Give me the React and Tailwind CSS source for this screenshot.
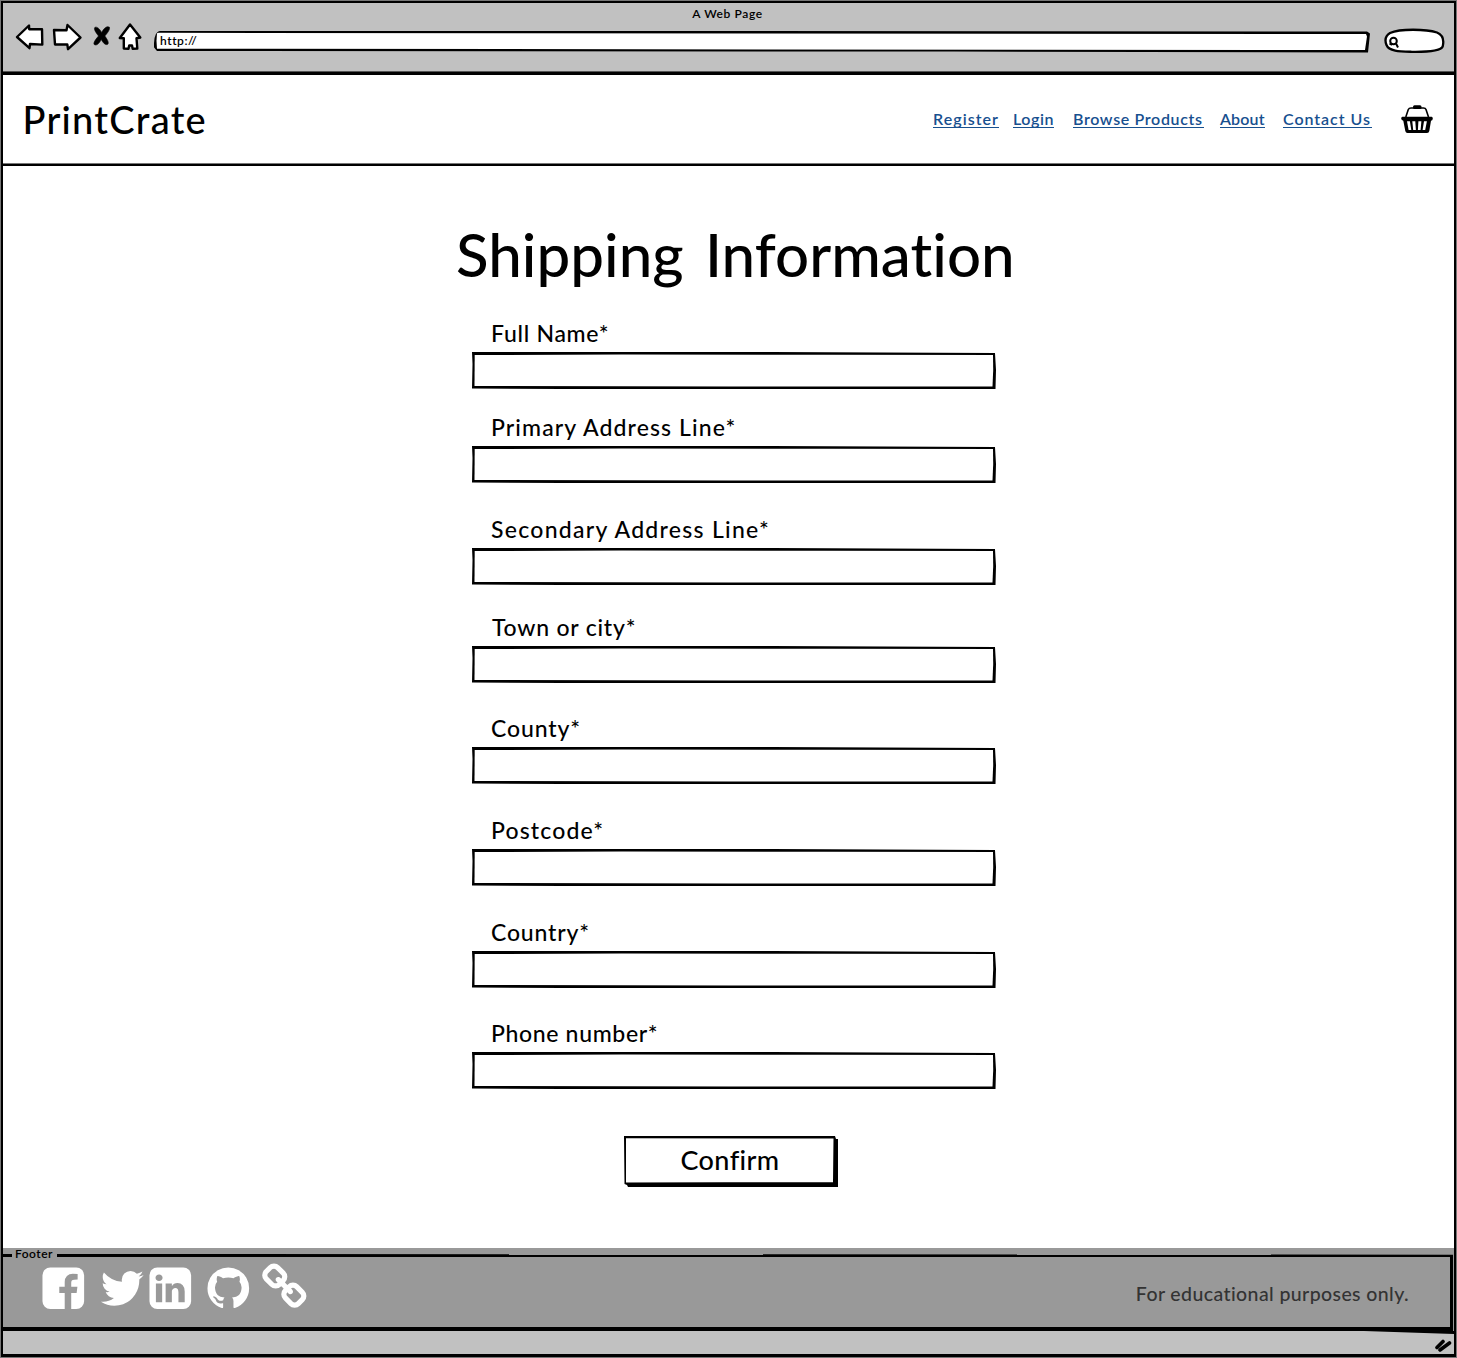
import React from 'react';

const FIELDS = [
  { label: 'Full Name*', cls: 'tracking-[0.72px]', gap: '' },
  { label: 'Primary Address Line*', cls: 'tracking-[1.11px]', gap: 'mt-6' },
  { label: 'Secondary Address Line*', cls: 'tracking-[1.28px]', gap: 'mt-8' },
  { label: 'Town or city*', cls: 'pl-[20px] tracking-[0.78px]', gap: 'mt-7' },
  { label: 'County*', cls: 'tracking-[0.87px]', gap: 'mt-[31px]' },
  { label: 'Postcode*', cls: 'tracking-[1.14px]', gap: 'mt-8' },
  { label: 'Country*', cls: 'tracking-[0.83px]', gap: 'mt-8' },
  { label: 'Phone number*', cls: 'tracking-[0.66px]', gap: 'mt-[31px]' },
];

const LINKS = [
  { label: 'Register', cls: 'w-[66px] tracking-[1.05px]' },
  { label: 'Login', cls: 'ml-[14px] w-[41px] tracking-[0.55px]' },
  { label: 'Browse Products', cls: 'ml-[19px] w-[131px] tracking-[0.65px]' },
  { label: 'About', cls: 'ml-4 w-[45px] tracking-[0.15px]' },
  { label: 'Contact Us', cls: 'ml-[18px] w-[89px] tracking-[0.95px]' },
];

function Fa({ d, className }) {
  return (
    <svg viewBox="0 0 1792 1792" className={'block size-[48.6px] shrink-0 fill-white ' + className}>
      <path d={d} />
    </svg>
  );
}

const FACEBOOK = 'M1376 128q119 0 203.5 84.5t84.5 203.5v960q0 119-84.5 203.5t-203.5 84.5h-188v-595h199l30-232h-229v-148q0-56 23.5-84t91.5-28l122-1v-207q-63-9-178-9-136 0-217.5 80t-81.5 226v171h-200v232h200v595h-532q-119 0-203.5-84.5t-84.5-203.5v-960q0-119 84.5-203.5t203.5-84.5h960z';
const TWITTER = 'M1684 408q-67 98-162 167 1 14 1 42 0 130-38 259.5t-115.5 248.5-184.5 210.5-258 146-323 54.5q-271 0-496-145 35 4 78 4 225 0 401-138-105-2-188-64.5t-114-159.5q33 5 61 5 43 0 85-11-112-23-185.5-111.5t-73.5-205.5v-4q68 38 146 41-66-44-105-115t-39-154q0-88 44-163 121 149 294.5 238.5t371.5 99.5q-8-38-8-74 0-134 94.5-228.5t228.5-94.5q140 0 236 102 109-21 205-78-37 115-142 178 93-10 186-50z';
const LINKEDIN = 'M365 1414h231v-694h-231v694zm246-908q-1-52-36-86t-93-34-94.5 34-36.5 86q0 51 35.5 85.5t92.5 34.5h1q59 0 95-34.5t36-85.5zm585 908h231v-398q0-154-73-233t-193-79q-136 0-209 117h2v-101h-231q3 66 0 694h231v-388q0-38 7-56 15-35 45-59.5t74-24.5q116 0 116 157v371zm468-998v960q0 119-84.5 203.5t-203.5 84.5h-960q-119 0-203.5-84.5t-84.5-203.5v-960q0-119 84.5-203.5t203.5-84.5h960q119 0 203.5 84.5t84.5 203.5z';
const GITHUB = 'M896 128q209 0 385.5 103t279.5 279.5 103 385.5q0 251-146.5 451.5t-378.5 277.5q-27 5-40-7t-13-30q0-3 .5-76.5t.5-134.5q0-97-52-142 57-6 102.5-18t94-39 81-66.5 53-105 20.5-150.5q0-119-79-206 37-91-8-204-28-9-81 11t-92 44l-38 24q-93-26-192-26t-192 26q-16-11-42.5-27t-83.5-38.5-85-13.5q-45 113-8 204-79 87-79 206 0 85 20.5 150t52.5 105 80.5 67 94 39 102.5 18q-39 36-49 103-21 10-45 15t-57 5-65.5-21.5-55.5-62.5q-19-32-48.5-52t-49.5-24l-20-3q-21 0-29 4.5t-5 11.5 9 14 13 12l7 5q22 10 43.5 38t31.5 51l10 23q13 38 44 61.5t67 30 69.5 7 55.5-3.5l23-4q0 38 .5 88.5t.5 54.5q0 18-13 30t-40 7q-232-77-378.5-277.5t-146.5-451.5q0-209 103-385.5t279.5-279.5 385.5-103z';
const CHAIN = 'M1520 1216q0-40-28-68l-208-208q-28-28-68-28-42 0-72 32 3 3 19 18.5t21.5 21.5 15 19 13 25.5 3.5 27.5q0 40-28 68t-68 28q-15 0-27.5-3.5t-25.5-13-19-15-21.5-21.5-18.5-19q-33 31-33 73 0 40 28 68l206 207q27 27 68 27 40 0 68-26l147-146q28-28 28-67zm-703-705q0-40-28-68l-206-207q-28-28-68-28-39 0-68 27l-147 146q-28 28-28 67 0 40 28 68l208 208q27 27 68 27 42 0 72-31-3-3-19-18.5t-21.5-21.5-15-19-13-25.5-3.5-27.5q0-40 28-68t68-28q15 0 27.5 3.5t25.5 13 19 15 21.5 21.5 18.5 19q33-31 33-73zm895 705q0 120-85 203l-147 146q-83 83-203 83-121 0-204-85l-206-207q-83-83-83-203 0-123 88-209l-88-88q-86 88-208 88-120 0-204-84l-208-208q-84-84-84-204t85-203l147-146q83-83 203-83 121 0 204 85l206 207q83 83 83 203 0 123-88 209l88 88q86-88 208-88 120 0 204 84l208 208q84 84 84 204z';

function BrowserBar() {
  return (
    <div className="relative h-[72px] shrink-0 border-b-[3px] border-black bg-[#c1c1c1] shadow-[inset_0_-1px_0_#555]">
      <div className="pr-0.5 pt-0.5 text-center text-xs font-semibold leading-[17px] tracking-[0.6px]">A Web Page</div>
      <div className="flex items-start pl-[11px]">
        <svg viewBox="14 22 130 30" className="h-[30px] w-[130px] fill-white stroke-black stroke-[2.4] [stroke-linejoin:round]">
          <path d="M17 37 29 25.5 29.2 29.2 42 29.3 42.3 44.6 30 44 29.5 48.2Z" />
          <path d="M54 30 66.5 30.2 67.5 25 80.5 37.5 68 49.2 67.3 44.4 55 44.5Z" />
          <path className="fill-black stroke-[0.6]" d="M94.800 27.500C97 26 100 29.500 101.800 32.500C103.500 28.500 107 25.500 109.500 27.300C110 30 107 33.500 104.800 36C107 39 109 42 108 44C105.500 46 103 42.500 101.200 39.500C99.500 43 96.500 46.500 94 44.300C93.300 42 96.500 38.500 98.500 36C96.300 33 93.500 29.500 94.800 27.500Z" />
          <path d="M130 24.500 140.300 37.500 136.500 38.200 137.300 48.500 132.700 48.700 132 45.500 129.200 45.500 128.500 48.800 123.800 48.500 123.800 38.200 119.800 38Z" />
        </svg>
        <div className="relative ml-[10px] mt-[8.500px] h-[22px] w-[1216px]">
          <div className="absolute inset-0 rounded-[6px_2px_2px_6px/12px_3px_8px_6px] bg-black [clip-path:polygon(0_0,1213px_1px,1216px_3px,1214px_22px,1211px_22px,800px_21px,3px_20.500px,0_17px)]" />
          <div className="absolute inset-0 rounded-[9px_2px_2px_9px] bg-white [clip-path:polygon(3px_2.300px,1212px_3.500px,1213px_6px,1211px_19.600px,3px_18.200px,2.500px_10px)]" />
          <span className="relative block pl-[6px] text-xs font-semibold leading-[20px] tracking-[0.55px]">http://</span>
        </div>
        <svg viewBox="1383 27 63 28" className="ml-[13px] mt-[5px] h-7 w-[63px] shrink-0 fill-white stroke-black stroke-[2.3]">
          <path d="M1390 33C1400 28.500 1426 29 1437 32.500C1443 35 1444 41 1442.700 46.500C1441 50.500 1428 52 1412 51.800C1400 51.500 1389 51.500 1386.500 45C1384.500 40 1386 35.500 1390 33Z" />
          <circle cx="1393.500" cy="41" r="3.300" strokeWidth="2" />
          <path d="M1389.500 43.500 1392 45M1396 43.500 1398 47.500" strokeWidth="2" />
        </svg>
      </div>
    </div>
  );
}

function Basket() {
  return (
    <svg viewBox="1400 103 34 32" className="ml-[28px] mt-[28px] h-8 w-[34px] shrink-0">
      <path d="M1405.800 117 1408.300 109.500Q1409 108 1411 108H1423.500Q1425.500 108 1426 109.500L1428.500 117" fill="none" stroke="#000" strokeWidth="1.600" />
      <rect x="1413" y="105.300" width="8.500" height="3.600" rx="1.500" />
      <path d="M1402.300 116.700H1431.700Q1433 117 1432.800 118.800 1432.500 120.600 1431 120.700L1429.300 131Q1429 132.900 1427 132.900H1407.500Q1405.700 132.900 1405.300 131L1403.300 120.700Q1401.500 120.500 1401.200 118.800 1401 117 1402.300 116.700Z" />
      <path d="M1407 121.200H1409.900L1411.300 130H1408.600ZM1412.300 121.200H1415.300L1415.900 130H1413.200ZM1418.400 121.200H1421.400L1420.600 130H1417.900ZM1424 121.200H1426.900L1425.200 130H1422.600Z" fill="#fff" />
    </svg>
  );
}

export default function App() {
  return (
    <div className="h-[1358px] w-[1457px] bg-white p-px font-['Lato',sans-serif] font-medium text-black">
      <div className="flex h-[1356px] w-[1455px] flex-col border-x-2 border-b-[3px] border-t-2 border-black shadow-[0_0_0_1px_#777]">
        <BrowserBar />

        <header className="flex h-[91px] shrink-0 items-start border-b-2 border-black pl-[18.500px] pr-[20px] shadow-[inset_0_-1px_0_#777]">
          <div className="mt-[20.500px] pl-px text-[38px] leading-[46px] tracking-[1.250px]">PrintCrate</div>
          <nav className="ml-auto mt-[35px] flex text-base font-semibold leading-[17px] text-[#17508f]">
            {LINKS.map((l) => (
              <a key={l.label} href="#" className={'block whitespace-nowrap border-b border-[#17508f] ' + l.cls}>{l.label}</a>
            ))}
          </nav>
          <Basket />
        </header>

        <main className="flex flex-1 flex-col pl-[469px]">
          <h1 className="-ml-4 mt-[58px] whitespace-nowrap text-[60px] leading-[60px] tracking-[0.050px] [word-spacing:6px]">Shipping Information</h1>
          <form className="mt-[35px] w-[524px]">
            {FIELDS.map((f) => (
              <div key={f.label} className={f.gap}>
                <label className={'block text-[23px] leading-7 ' + (f.cls.startsWith('pl') ? '' : 'pl-[19px] ') + f.cls}>{f.label}</label>
                <div className="relative mt-[5px] h-[37px]">
                  <div className="absolute inset-0 bg-black [clip-path:polygon(0_0,300px_0,523px_1px,524px_18px,523.500px_37px,300px_37.500px,90px_37px,0_36.500px,0.500px_12px)]" />
                  <div className="absolute inset-0 bg-white [clip-path:polygon(2.700px_3px,150px_2.600px,350px_2.800px,521px_3px,521.200px_18px,520.500px_34.600px,260px_34.500px,2.500px_34px)]" />
                  <input aria-label={f.label} className="relative block h-full w-full bg-transparent px-4 outline-none" />
                </div>
              </div>
            ))}
          </form>
          <button type="button" className="relative ml-[152px] mt-[47px] block h-[51px] w-[214px]">
            <span className="absolute inset-0 bg-black [clip-path:polygon(0_0,211px_0,212px_3px,214px_3px,214px_51px,4px_51px,3px_49px,0.500px_48px)]" />
            <span className="absolute inset-0 bg-white [clip-path:polygon(2px_2.300px,209.500px_2.600px,209px_46.300px,100px_46.300px,2px_46.600px)]" />
            <span className="relative -top-[2px] block pr-[2px] text-center text-[27px] leading-[50px] tracking-[0.400px]">Confirm</span>
          </button>
        </main>

        <footer className="flex h-[83px] shrink-0 flex-col bg-[#999]">
          <div className="flex h-[15px] shrink-0 items-center">
            <span className="h-[3px] w-[9px] bg-black" />
            <span className="w-[45px] pb-[4px] pl-[3px] text-xs font-semibold leading-[11px] tracking-[0.500px]">Footer</span>
            <span className="h-[3px] flex-1 bg-black [clip-path:polygon(0_0,700px_0.300px,1396px_0.700px,1396px_3px,0_3px)]" />
          </div>
          <div className="-mt-[8px] mr-px flex flex-1 items-start border-b-[4px] border-r-[3px] border-black pl-[35.500px] pr-[41px]">
            <Fa d={FACEBOOK} className="mt-[8.500px]" />
            <Fa d={TWITTER} className="ml-[11px] mt-[8.500px]" />
            <Fa d={LINKEDIN} className="-ml-[0.500px] mt-[8.500px]" />
            <Fa d={GITHUB} className="ml-[9px] mt-[8.500px]" />
            <Fa d={CHAIN} className="ml-[8px] mt-[8px]" />
            <p className="ml-auto mt-[27px] text-[19.500px] leading-6 tracking-[0.400px] text-[#333]">For educational purposes only.</p>
          </div>
        </footer>

        <div className="relative flex h-[23px] shrink-0 justify-end bg-[#c1c1c1]">
          <div className="absolute right-0 top-0 h-[3px] w-[90px] bg-black [clip-path:polygon(0_0,100%_0,100%_100%)]" />
          <svg viewBox="1434 1337 18 16" className="mr-[2px] mt-[6px] h-4 w-[18px] fill-none stroke-black stroke-[3.600] [stroke-linecap:round]">
            <path d="M1437 1347.500 1443 1341.500M1440 1350 1449.500 1343" />
          </svg>
        </div>
      </div>
    </div>
  );
}
